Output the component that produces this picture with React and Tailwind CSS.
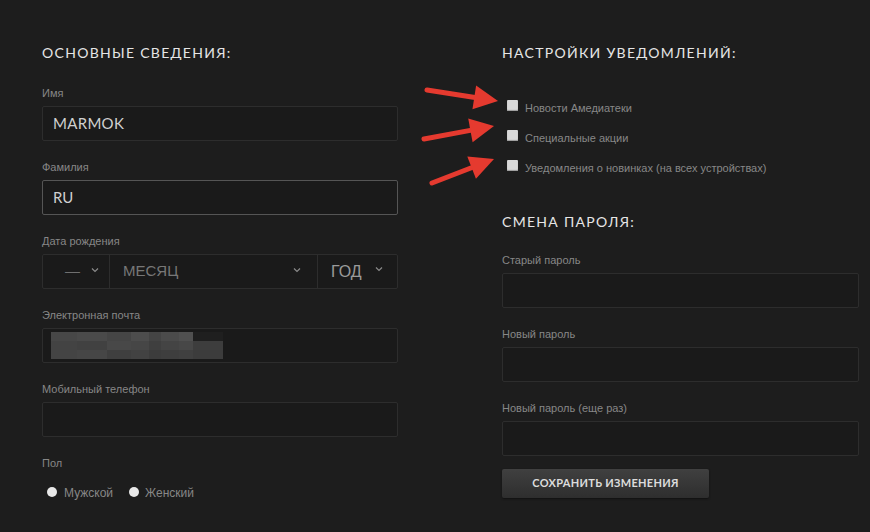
import React from "react";

const head = "font-['Lato',sans-serif] text-[14px] leading-[20px] tracking-[1.3px] text-[#e6e6e6] uppercase";
const label = "font-['Liberation_Sans',Arial,sans-serif] text-[11px] leading-[16px] text-[#878787]";
const box = "h-[35px] w-full border border-[#2d2d2d] bg-[#1a1a1a] rounded-[2px]";

function Chevron({ className }) {
  return (
    <svg className={className} width="8" height="6" viewBox="0 0 8 6" fill="none">
      <path d="M1 1.5l3 3 3-3" stroke="#8a8a8a" strokeWidth="1.2" />
    </svg>
  );
}

function Field({ name, children, className = "" }) {
  return (
    <div className={className}>
      <div className={label}>{name}</div>
      <div className="mt-[5px]">{children}</div>
    </div>
  );
}

// blurred email placeholder blocks: [width, colour] per row
const mosaic = [
  [[26, "#474747"], [30, "#4a4a4a"], [24, "#454545"], [18, "#4d4d4d"], [12, "#444"], [18, "#4b4b4b"], [14, "#505050"], [30, "#1f1f1f"]],
  [[26, "#434343"], [30, "#414141"], [24, "#484848"], [18, "#464646"], [12, "#3f3f3f"], [18, "#444"], [14, "#474747"], [30, "#3d3d3d"]],
  [[26, "#444"], [30, "#464646"], [24, "#3f3f3f"], [18, "#424242"], [12, "#3c3c3c"], [18, "#3e3e3e"], [14, "#404040"], [30, "#3c3c3c"]],
];

function Check({ children }) {
  return (
    <div className="flex h-[30px] items-center">
      <span className="ml-[5px] mb-[5px] h-[11px] w-[11px] rounded-[1px] bg-[#d9d9d9] shadow-[inset_0_-1px_1px_#999]" />
      <span className={label + " ml-[7px]"}>{children}</span>
    </div>
  );
}

function Arrows() {
  const arrow = (x1, y1, x2, y2) => {
    const a = Math.atan2(y2 - y1, x2 - x1);
    const len = 24;
    const w = 12;
    const bx = x2 - Math.cos(a) * len;
    const by = y2 - Math.sin(a) * len;
    const px = -Math.sin(a) * w;
    const py = Math.cos(a) * w;
    const sx = x2 - Math.cos(a) * (len - 4);
    const sy = y2 - Math.sin(a) * (len - 4);
    return (
      <g>
        <line x1={x1} y1={y1} x2={sx} y2={sy} stroke="#e53a2f" strokeWidth="5" strokeLinecap="round" />
        <polygon points={`${x2},${y2} ${bx + px},${by + py} ${bx - px},${by - py}`} fill="#e53a2f" />
      </g>
    );
  };
  return (
    <svg className="absolute left-0 top-0 pointer-events-none" width="870" height="532">
      {arrow(427, 90, 498, 101)}
      {arrow(424, 139, 494, 126)}
      {arrow(432, 183, 494, 159)}
    </svg>
  );
}

export default function App() {
  return (
    <div className="relative h-[532px] w-[870px] overflow-hidden bg-[#1d1d1d]">
      <div className="flex pl-[42px] pt-[43px]">
        {/* left column */}
        <div className="w-[356px]">
          <h2 className={head}>Основные сведения:</h2>
          <Field name="Имя" className="mt-[22px]">
            <div className={box + " flex items-center px-[10px] font-['Lato',sans-serif] text-[15px] tracking-[0.3px] text-[#d0d0d0]"}>MARMOK</div>
          </Field>
          <Field name="Фамилия" className="mt-[18px]">
            <div className="flex h-[35px] w-full items-center rounded-[2px] border border-[#555] bg-[#1a1a1a] px-[10px] font-['Lato',sans-serif] text-[15px] text-[#d0d0d0]">RU</div>
          </Field>
          <Field name="Дата рождения" className="mt-[18px]">
            <div className="flex h-[35px] w-full rounded-[2px] border border-[#2d2d2d] bg-[#1a1a1a] font-['Liberation_Sans',Arial,sans-serif] text-[15px]">
              <div className="flex w-[67px] items-center border-r border-[#2d2d2d] pl-[22px]">
                <span className="text-[#6f6f6f]">—</span>
                <Chevron className="ml-[11px] mb-[4px]" />
              </div>
              <div className="flex w-[208px] items-center justify-between border-r border-[#2d2d2d] pl-[13px] pr-[16px]">
                <span className="text-[#777]">МЕСЯЦ</span>
                <Chevron className="mb-[4px]" />
              </div>
              <div className="flex flex-1 items-center pl-[13px]">
                <span className="text-[16px] text-[#9a9a9a]">ГОД</span>
                <Chevron className="ml-[13px] mb-[6px]" />
              </div>
            </div>
          </Field>
          <Field name="Электронная почта" className="mt-[18px]">
            <div className={box + " flex items-center pl-[8px]"}>
              <div className="flex flex-col">
                {mosaic.map((row, i) => (
                  <div key={i} className="flex">
                    {row.map(([w, c], j) => (
                      <div key={j} className="h-[9px]" style={{ width: w, background: c }} />
                    ))}
                  </div>
                ))}
              </div>
            </div>
          </Field>
          <Field name="Мобильный телефон" className="mt-[18px]">
            <div className={box} />
          </Field>
          <div className={label + " mt-[18px]"}>Пол</div>
          <div className="mt-[11px] flex items-center">
            <span className="ml-[5px] h-[10px] w-[10px] rounded-full bg-[#e8e8e8]" />
            <span className={label + " ml-[7px] mt-[3px] text-[12px]"}>Мужской</span>
            <span className="ml-[16px] h-[10px] w-[10px] rounded-full bg-[#e8e8e8]" />
            <span className={label + " ml-[6px] mt-[3px] text-[12px]"}>Женский</span>
          </div>
        </div>

        {/* right column */}
        <div className="ml-[104px] w-[357px]">
          <h2 className={head}>Настройки уведомлений:</h2>
          <div className="mt-[30px]">
            <Check>Новости Амедиатеки</Check>
            <Check>Специальные акции</Check>
            <Check>Уведомления о новинках (на всех устройствах)</Check>
          </div>
          <h2 className={head + " mt-[29px]"}>Смена пароля:</h2>
          <Field name="Старый пароль" className="mt-[20px]">
            <div className={box} />
          </Field>
          <Field name="Новый пароль" className="mt-[18px]">
            <div className={box} />
          </Field>
          <Field name="Новый пароль (еще раз)" className="mt-[18px]">
            <div className={box} />
          </Field>
          <button className="mt-[13px] h-[29px] w-[207px] rounded-[2px] bg-gradient-to-b from-[#404040] to-[#2e2e2e] font-['Lato',sans-serif] text-[11px] font-bold tracking-[0.3px] text-[#dcdcdc] shadow-[0_1px_2px_#111]">
            СОХРАНИТЬ ИЗМЕНЕНИЯ
          </button>
        </div>
      </div>
      <Arrows />
    </div>
  );
}
